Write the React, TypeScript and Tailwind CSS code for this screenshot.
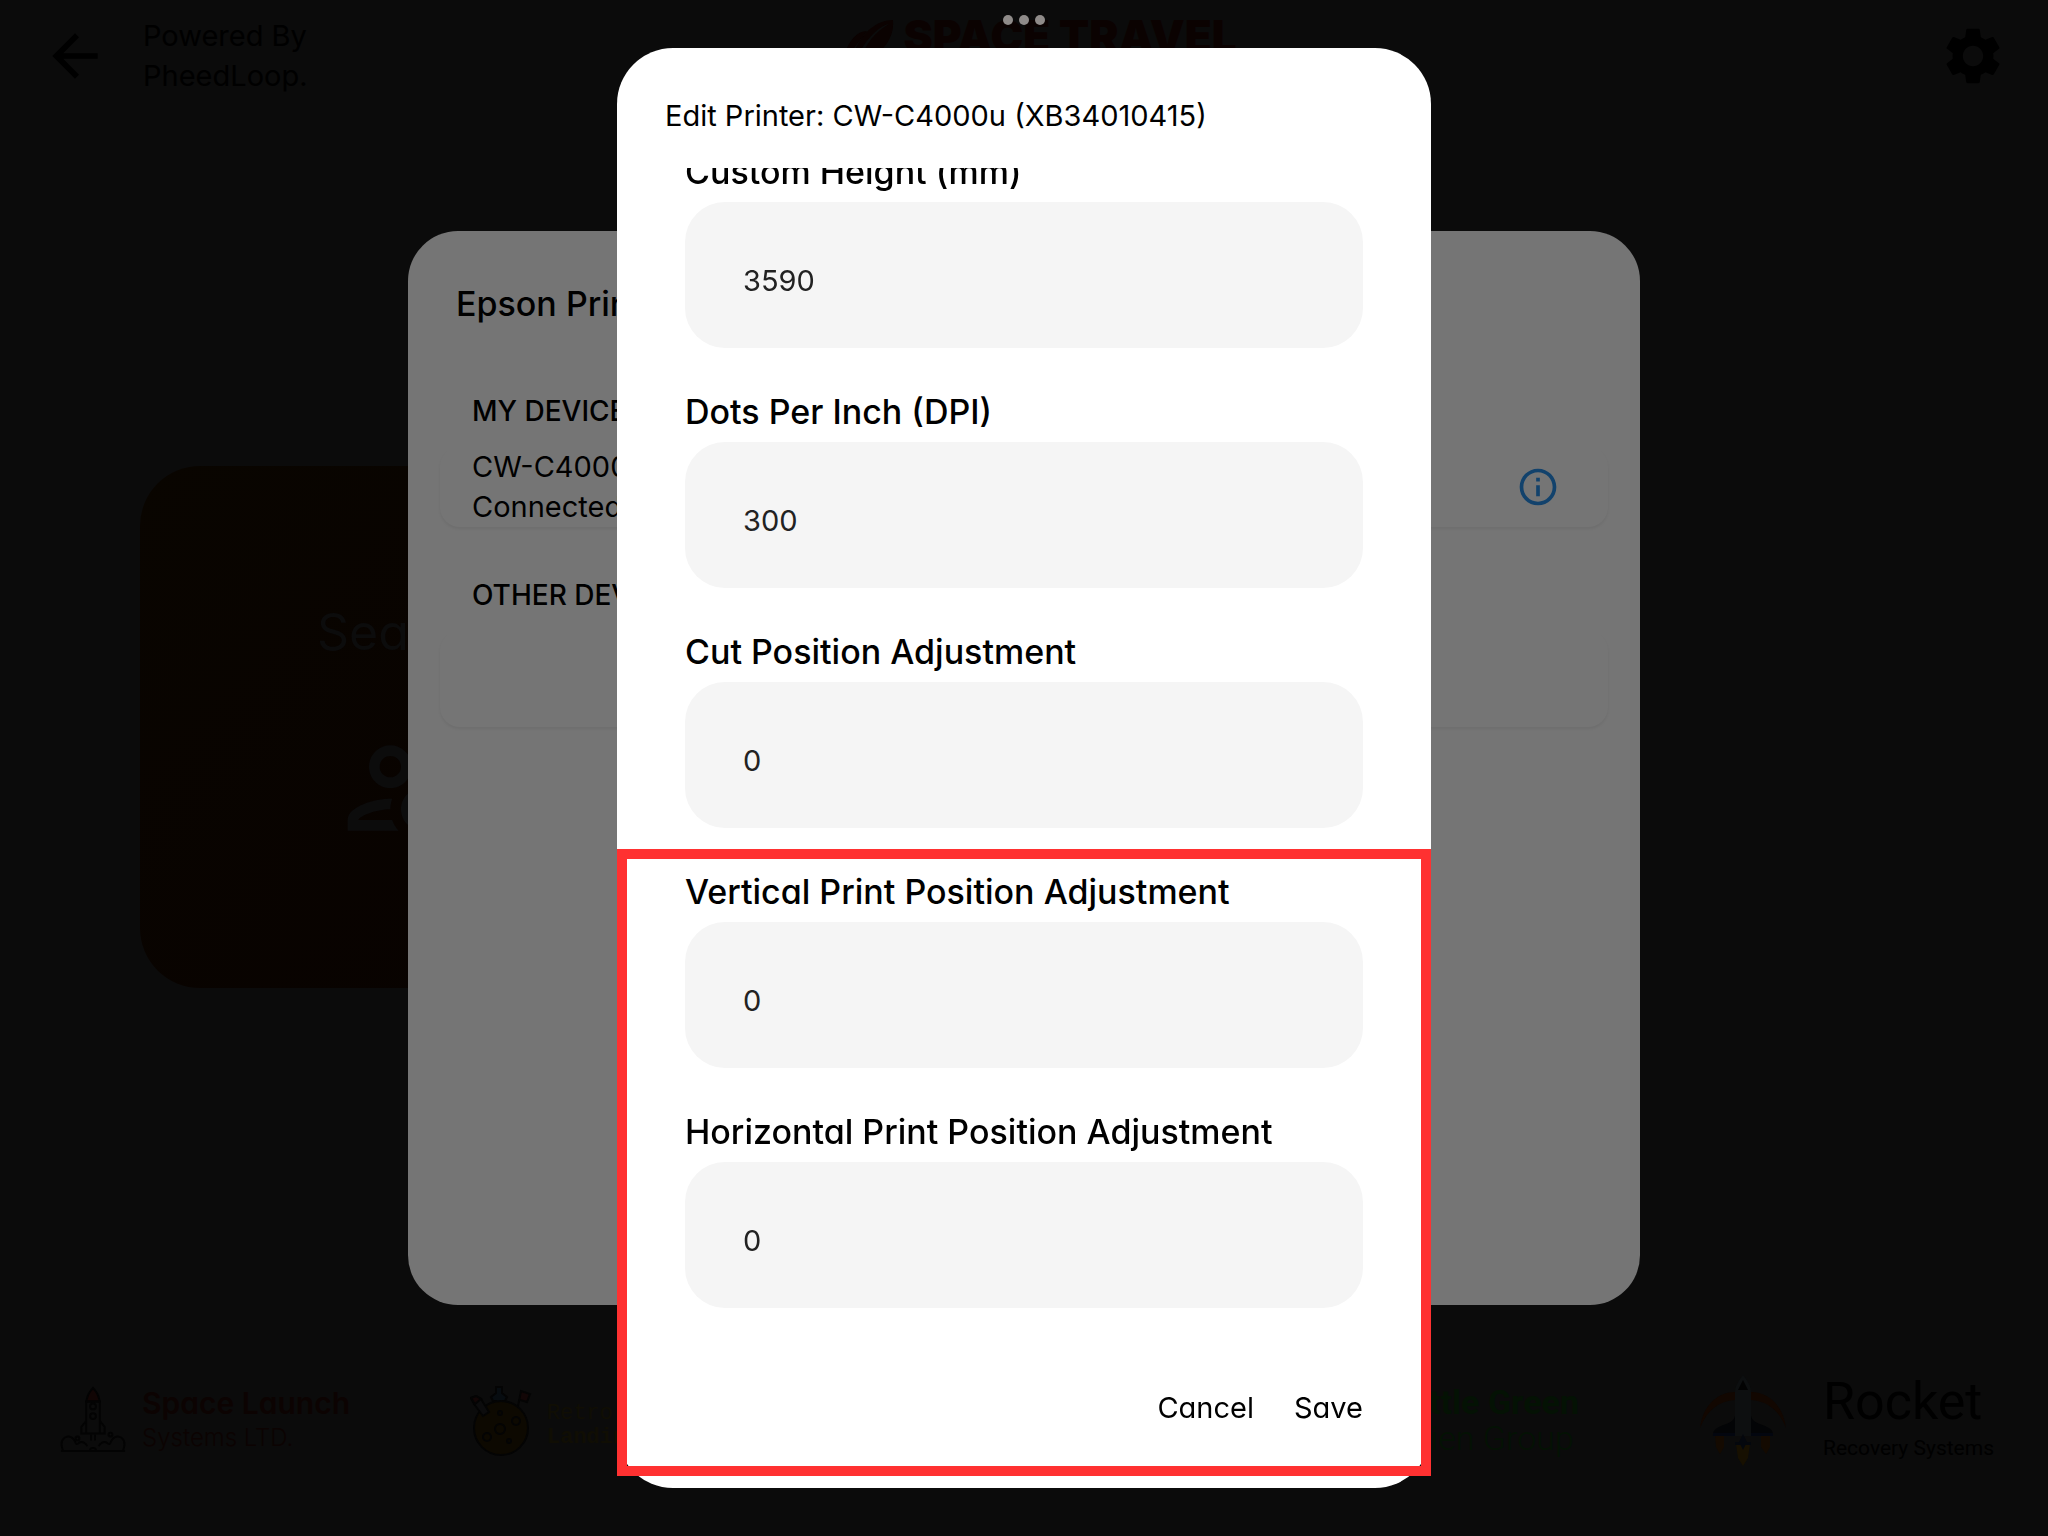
import { MdArrowBack, MdInfoOutline, MdOutlinePersonSearch, MdSettings } from 'react-icons/md'

const fields = [
  { id: 'height', label: 'Custom Height (mm)', value: '3590' },
  { id: 'dpi', label: 'Dots Per Inch (DPI)', value: '300' },
  { id: 'cut', label: 'Cut Position Adjustment', value: '0' },
  { id: 'vertical', label: 'Vertical Print Position Adjustment', value: '0' },
  { id: 'horizontal', label: 'Horizontal Print Position Adjustment', value: '0' },
]

const LaunchLogo = () => (
  <svg viewBox="0 0 68 68" className="h-[68px] w-[68px]" fill="none" stroke="#030303" strokeWidth="2">
    <path d="M34 1c-4 4-6 8-7 14h14c-1-6-3-10-7-14z" fill="#110504" />
    <path d="M27 15h14v33H27zM27 35l-5 6v7h24v-7l-5-6" />
    <circle cx="34" cy="20" r="3" />
    <circle cx="34" cy="30" r="3" />
    <path d="M1 66h66M3 65c-5-12 6-18 11-11 3 3 1 6 5 4 4-3 8 0 9 3M65 65c5-12-6-18-11-11-3 3-1 6-5 4-4-3-8 0-9 3M31 65c0-3 6-3 6 0M32 49v6M36 49v6" />
    <circle cx="52" cy="49" r="2" />
    <circle cx="18" cy="53" r="2" />
  </svg>
)

const MoonLogo = () => (
  <svg viewBox="0 0 65 72" className="h-[72px] w-[65px]" stroke="#040404" strokeWidth="2">
    <path d="M26 3h6v6l5 4-2 4h-2v8h-7v-8h-3l-2-4 5-4z" fill="#070c10" />
    <path d="M48 22l3-15 9 3-3 8-7-2" fill="#120606" />
    <circle cx="31" cy="44" r="27" fill="#0d0901" />
    <path d="M1 14l5-2 5 3 8 13-6 4L4 20z" fill="#0c0c0d" />
    <path d="M1 14l5-2 5 3-6 5z" fill="#120606" />
    <circle cx="30" cy="45" r="5" fill="none" />
    <circle cx="46" cy="37" r="4" fill="none" />
    <circle cx="17" cy="53" r="4" fill="none" />
    <circle cx="39" cy="57" r="2" fill="none" />
    <circle cx="30" cy="29" r="2" fill="none" />
  </svg>
)

const ShuttleLogo = () => (
  <svg viewBox="0 0 88 92" className="h-[92px] w-[88px]">
    <path d="M1 54C4 30 20 18 36 18v8C20 27 8 36 1 54zM87 54C84 30 68 18 52 18v8c16 1 28 10 35 28z" fill="#120701" />
    <path d="M16 61h9v12l-4 7-4-7zM62 61h9v12l-4 7-5-7z" fill="#140a01" />
    <path d="M37 70h14l-2 14-5 8-5-8z" fill="#171001" />
    <path d="M36 30v12c-2 8-12 8-18 12-4 3-4 5-4 8h22M52 30v12c2 8 12 8 18 12 4 3 4 5 4 8H52" fill="#030406" />
    <path d="M14 59h22v3H14zM52 59h22v3H52z" fill="#03060f" />
    <path d="M36 18c0-6 4-12 8-17 4 5 8 11 8 17v44H36z" fill="#0d0f10" />
    <path d="M39 16l5-10 5 10z" fill="#020202" />
    <path d="M36 68h16v3H36zM44 60l4 8-4 8-4-8z" fill="#04070d" />
  </svg>
)

const Kiosk = () => (
  <div className="flex min-h-screen flex-col bg-[#0b0b0b]">
    <header className="flex h-28 items-center px-[41px] text-black">
      <button type="button" aria-label="Back">
        <MdArrowBack size={68} />
      </button>
      <p className="ml-[34px] w-60 text-[29px] leading-10">
        Powered By
        <br />
        PheedLoop.
      </p>
      <div className="flex flex-1 items-start justify-center gap-2 self-start pt-3 pl-8 text-[#0b0201]">
        <svg viewBox="0 0 52 44" className="mt-2 h-11 w-[52px]" fill="currentColor">
          <path d="M50 0C34 0 20 12 12 30l2 8C20 24 34 6 46 4 32 12 22 24 18 40c16-2 34-18 32-40z" />
          <path d="M24 11c-10 0-18 10-22 22l9-5z" />
        </svg>
        <span className="text-[44px] leading-[48px] font-black whitespace-nowrap">SPACE TRAVEL</span>
      </div>
      <div className="flex w-[342px] justify-end">
        <button type="button" aria-label="Settings">
          <MdSettings size={68} />
        </button>
      </div>
    </header>

    <main className="flex flex-1 items-start px-[140px] pt-[354px]">
      <button
        type="button"
        className="flex h-[522px] w-[522px] flex-col items-center rounded-[60px] bg-linear-to-br from-[#090500] to-[#080200] pt-[134px] text-[#0c0c0c]"
      >
        <span className="text-[50px] leading-[64px]">Search</span>
        <MdOutlinePersonSearch size={128} className="mt-[60px]" />
      </button>
    </main>

    <footer className="flex h-[232px] items-center justify-between px-[60px]">
      <div className="flex items-center gap-30">
        <div className="flex w-[290px] items-center gap-4 text-[#0c0302]">
          <LaunchLogo />
          <p className="text-[30px] leading-8 whitespace-nowrap">
            <b className="font-semibold">Space Launch</b>
            <br />
            <span className="text-2xl font-light">Systems LTD.</span>
          </p>
        </div>
        <div className="flex items-center gap-3 font-['Liberation_Mono',monospace] text-[22px] leading-6 text-[#100e04]">
          <MoonLogo />
          <p className="pt-3">
            Retro
            <br />
            <b>Landing</b>
          </p>
        </div>
      </div>
      <div className="flex items-center gap-30 font-[Roboto,sans-serif]">
        <p className="text-[34px] leading-9 text-[#041204]">
          <b>Little Green</b>
          <br />
          <span className="font-light">Alien Group</span>
        </p>
        <div className="flex items-center gap-9 text-black">
          <ShuttleLogo />
          <p className="w-[165px] whitespace-nowrap">
            <span className="block text-[52px] leading-[52px]">Rocket</span>
            <span className="mt-1 block text-[21px] leading-8">Recovery Systems</span>
          </p>
        </div>
      </div>
    </footer>
  </div>
)

const PrinterList = () => (
  <div className="fixed inset-0 flex justify-center py-[231px]">
    <section className="w-full max-w-[1232px] rounded-[50px] bg-[#757575] px-8 pt-[46px] text-black">
      <h2 className="px-4 text-[34px] leading-[54px] font-medium">Epson Printers</h2>
      <h3 className="mt-[60px] px-8 text-[28px] leading-10 font-medium">MY DEVICES</h3>
      <div className="mt-4 flex h-20 items-center justify-between rounded-[20px] pr-12 pl-8 shadow-[0_2px_3px_rgba(0,0,0,0.06)]">
        <p className="text-[29px] leading-10">
          CW-C4000u
          <br />
          Connected
        </p>
        <button type="button" aria-label="Printer info" className="text-[#12426c]">
          <MdInfoOutline size={44} />
        </button>
      </div>
      <h3 className="mt-12 px-8 text-[28px] leading-10 font-medium">OTHER DEVICES</h3>
      <div className="mt-4 h-24 rounded-[20px] shadow-[0_2px_3px_rgba(0,0,0,0.06)]" />
    </section>
  </div>
)

const EditPrinter = () => (
  <div className="fixed inset-0 flex justify-center py-12">
    <form className="relative flex w-full max-w-[814px] flex-col rounded-[56px] bg-white text-black">
      <h1 className="h-[120px] shrink-0 px-12 pt-12 text-[29px] leading-10">
        Edit Printer: CW-C4000u (XB34010415)
      </h1>
      <div className="flex min-h-0 flex-1 flex-col justify-end gap-11 overflow-hidden px-[68px]">
        {fields.map((field) => (
          <div key={field.id} className="flex shrink-0 flex-col gap-[10px]">
            <label htmlFor={field.id} className="text-[34px] leading-10 font-medium">
              {field.label}
            </label>
            <input
              id={field.id}
              defaultValue={field.value}
              className="h-[146px] w-full rounded-[40px] bg-[#f5f5f5] px-[58px] pt-[10px] text-[29px] text-[#222] outline-none"
            />
          </div>
        ))}
      </div>
      <div className="flex h-[180px] shrink-0 items-start justify-end gap-10 px-[68px] pt-20 text-[29px] leading-10">
        <button type="button">Cancel</button>
        <button type="submit">Save</button>
      </div>
      {/* highlighted area */}
      <div className="pointer-events-none absolute inset-x-0 top-[801px] bottom-3 border-10 border-[#ff3131]" />
    </form>
  </div>
)

const App = () => {
  return (
    <div className="font-[Inter,sans-serif] [font-feature-settings:'cv11']">
      <Kiosk />
      <PrinterList />
      <EditPrinter />
      {/* multitasking dots */}
      <div className="fixed inset-x-0 top-[15px] flex justify-center gap-[6px]">
        <span className="h-[10px] w-[10px] rounded-full bg-[#8f8b89]" />
        <span className="h-[10px] w-[10px] rounded-full bg-[#8f8b89]" />
        <span className="h-[10px] w-[10px] rounded-full bg-[#8f8b89]" />
      </div>
    </div>
  )
}

export default App
